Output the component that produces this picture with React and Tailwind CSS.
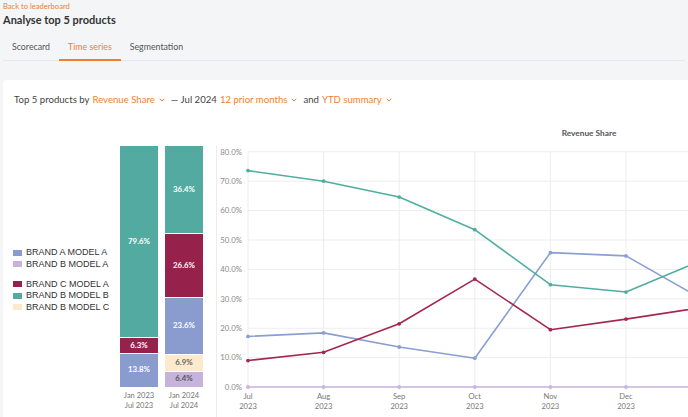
import { ChevronDown } from 'lucide-react'

const months = [
  ['Jul', '2023'], ['Aug', '2023'], ['Sep', '2023'], ['Oct', '2023'],
  ['Nov', '2023'], ['Dec', '2023'], ['Jan', '2024'],
]

const series = [
  { color: '#c9b4e2', values: [0, 0, 0, 0, 0, 0, 0] },
  { color: '#8a9ed4', values: [17.2, 18.4, 13.6, 9.8, 45.7, 44.6, 30] },
  { color: '#a3284f', values: [9.0, 11.8, 21.5, 36.7, 19.5, 23.1, 27] },
  { color: '#4faea2', values: [73.6, 70.0, 64.6, 53.5, 34.8, 32.3, 43] },
]

const legend = [
  { label: 'BRAND A MODEL A', color: 'bg-[#8a9cce]' },
  { label: 'BRAND B MODEL A', color: 'bg-[#c5b3dc]' },
  { label: 'BRAND C MODEL A', color: 'bg-[#96214b]', gap: true },
  { label: 'BRAND B MODEL B', color: 'bg-[#52aaa0]' },
  { label: 'BRAND B MODEL C', color: 'bg-[#fde9cb]' },
]

const bars = [
  {
    top: 'Jan 2023', bottom: 'Jul 2023',
    parts: [
      { v: 79.6, cls: 'bg-[#52aaa0] text-white' },
      { v: 6.3, cls: 'bg-[#96214b] text-white' },
      { v: 13.8, cls: 'bg-[#8a9cce] text-white' },
    ],
  },
  {
    top: 'Jan 2024', bottom: 'Jul 2024',
    parts: [
      { v: 36.4, cls: 'bg-[#52aaa0] text-white' },
      { v: 26.6, cls: 'bg-[#96214b] text-white' },
      { v: 23.6, cls: 'bg-[#8a9cce] text-white' },
      { v: 6.9, cls: 'bg-[#fde9cb] text-[#666]' },
      { v: 6.4, cls: 'bg-[#c5b3dc] text-[#555]' },
    ],
  },
]

const mx = (i) => 248 + i * 75.6
const my = (v) => 388 - v * 2.94

function Dropdown({ children }) {
  return (
    <span className="inline-flex items-center gap-[3px] text-[#ef7f2f]">
      {children}
      <ChevronDown size={8} strokeWidth={3} />
    </span>
  )
}

function StackBar({ bar }) {
  const total = bar.parts.reduce((s, p) => s + p.v, 0)
  return (
    <div className="flex w-[38px] flex-col items-center">
      <div className="flex h-[241px] w-[38px] flex-col">
        {bar.parts.map((p) => (
          <div
            key={p.v}
            className={`flex items-center justify-center border-b border-white text-[7.8px] font-bold last:border-b-0 ${p.cls}`}
            style={{ height: `${(p.v / total) * 241}px` }}
          >
            {p.v}%
          </div>
        ))}
      </div>
      <div className="mt-[4px] text-center text-[7.5px] leading-[10px] text-[#777]">
        <div>{bar.top}</div>
        <div>{bar.bottom}</div>
      </div>
    </div>
  )
}

function LineChart() {
  const grid = [0, 10, 20, 30, 40, 50, 60, 70, 80]
  return (
    <svg width="472" height="292" className="shrink-0" style={{ fontFamily: 'Lato, sans-serif' }}>
      <g transform="translate(-217,-125)">
        <text x="589" y="137" textAnchor="middle" fontSize="8.3" fontWeight="700" fill="#555">Revenue Share</text>
        {grid.map((g) => (
          <g key={g}>
            <line x1="248" x2="720" y1={my(g)} y2={my(g)} stroke="#ededed" strokeWidth="1" />
            <text x="242" y={my(g) + 2.7} textAnchor="end" fontSize="7.8" fill="#8a8a8a">{g.toFixed(1)}%</text>
          </g>
        ))}
        {months.map(([m, y], i) => (
          <g key={m}>
            <line x1={mx(i)} x2={mx(i)} y1={my(80)} y2={my(0) + 3} stroke="#ededed" strokeWidth="1" />
            {i < 6 && (
              <>
                <text x={mx(i)} y="400" textAnchor="middle" fontSize="7.6" fill="#777">{m}</text>
                <text x={mx(i)} y="410" textAnchor="middle" fontSize="7.6" fill="#777">{y}</text>
              </>
            )}
          </g>
        ))}
        {series.map((s, si) => (
          <g key={si}>
            <polyline
              points={s.values.map((v, i) => `${mx(i)},${my(v)}`).join(' ')}
              fill="none"
              stroke={s.color}
              strokeWidth="1.6"
              strokeLinejoin="round"
            />
            {s.values.map((v, i) => (
              <circle key={i} cx={mx(i)} cy={my(v)} r="1.9" fill={s.color} />
            ))}
          </g>
        ))}
      </g>
    </svg>
  )
}

export default function App() {
  return (
    <div className="h-[417px] w-[688px] overflow-hidden bg-[#f4f5f7] font-['Lato',sans-serif]">
      <div className="px-[3px]">
        <div className="pt-[1px] text-[7.6px] leading-[10px] text-[#ef7f2f]">Back to leaderboard</div>
        <h1 className="mt-[2px] text-[11px] font-bold leading-[14px] text-[#333]">Analyse top 5 products</h1>
        <div className="mt-[8px] flex border-b border-[#e6e7ea] text-[8.8px] leading-[12px]">
          <div className="-mb-px px-[9px] pb-[7px] pt-[6px] text-[#555]">Scorecard</div>
          <div className="-mb-px border-b-2 border-[#ef7f2f] px-[9px] pb-[6px] pt-[6px] text-[#ef7f2f]">Time series</div>
          <div className="-mb-px px-[9px] pb-[7px] pt-[6px] text-[#555]">Segmentation</div>
        </div>
        <div className="mt-[19px] h-[400px] w-[760px] rounded-[4px] bg-white">
          <div className="flex items-center gap-[3px] px-[11px] pt-[14px] text-[9.6px] leading-[12px] text-[#444]">
            <span>Top 5 products by</span>
            <Dropdown>Revenue Share</Dropdown>
            <span className="ml-[2px]">— Jul 2024</span>
            <Dropdown>12 prior months</Dropdown>
            <span className="ml-[2px]">and</span>
            <Dropdown>YTD summary</Dropdown>
          </div>
          <div className="mt-[18px] flex">
            <div className="w-[117px] pl-[10px] pt-[123px] font-['Liberation_Sans',Arial,sans-serif] text-[9px] leading-[11.5px] text-[#333]">
              {legend.map((l) => (
                <div key={l.label} className={`flex items-center gap-[4px] ${l.gap ? 'mt-[8.5px]' : ''}`}>
                  <span className={`h-[6px] w-[9px] ${l.color}`} />
                  <span>{l.label}</span>
                </div>
              ))}
            </div>
            <div className="flex gap-[7px] pt-[22px]">
              {bars.map((b) => (
                <StackBar key={b.top} bar={b} />
              ))}
            </div>
            <div className="ml-[13px] mt-[22px] h-[280px] w-px bg-[#ececec]" />
            <LineChart />
          </div>
        </div>
      </div>
    </div>
  )
}
